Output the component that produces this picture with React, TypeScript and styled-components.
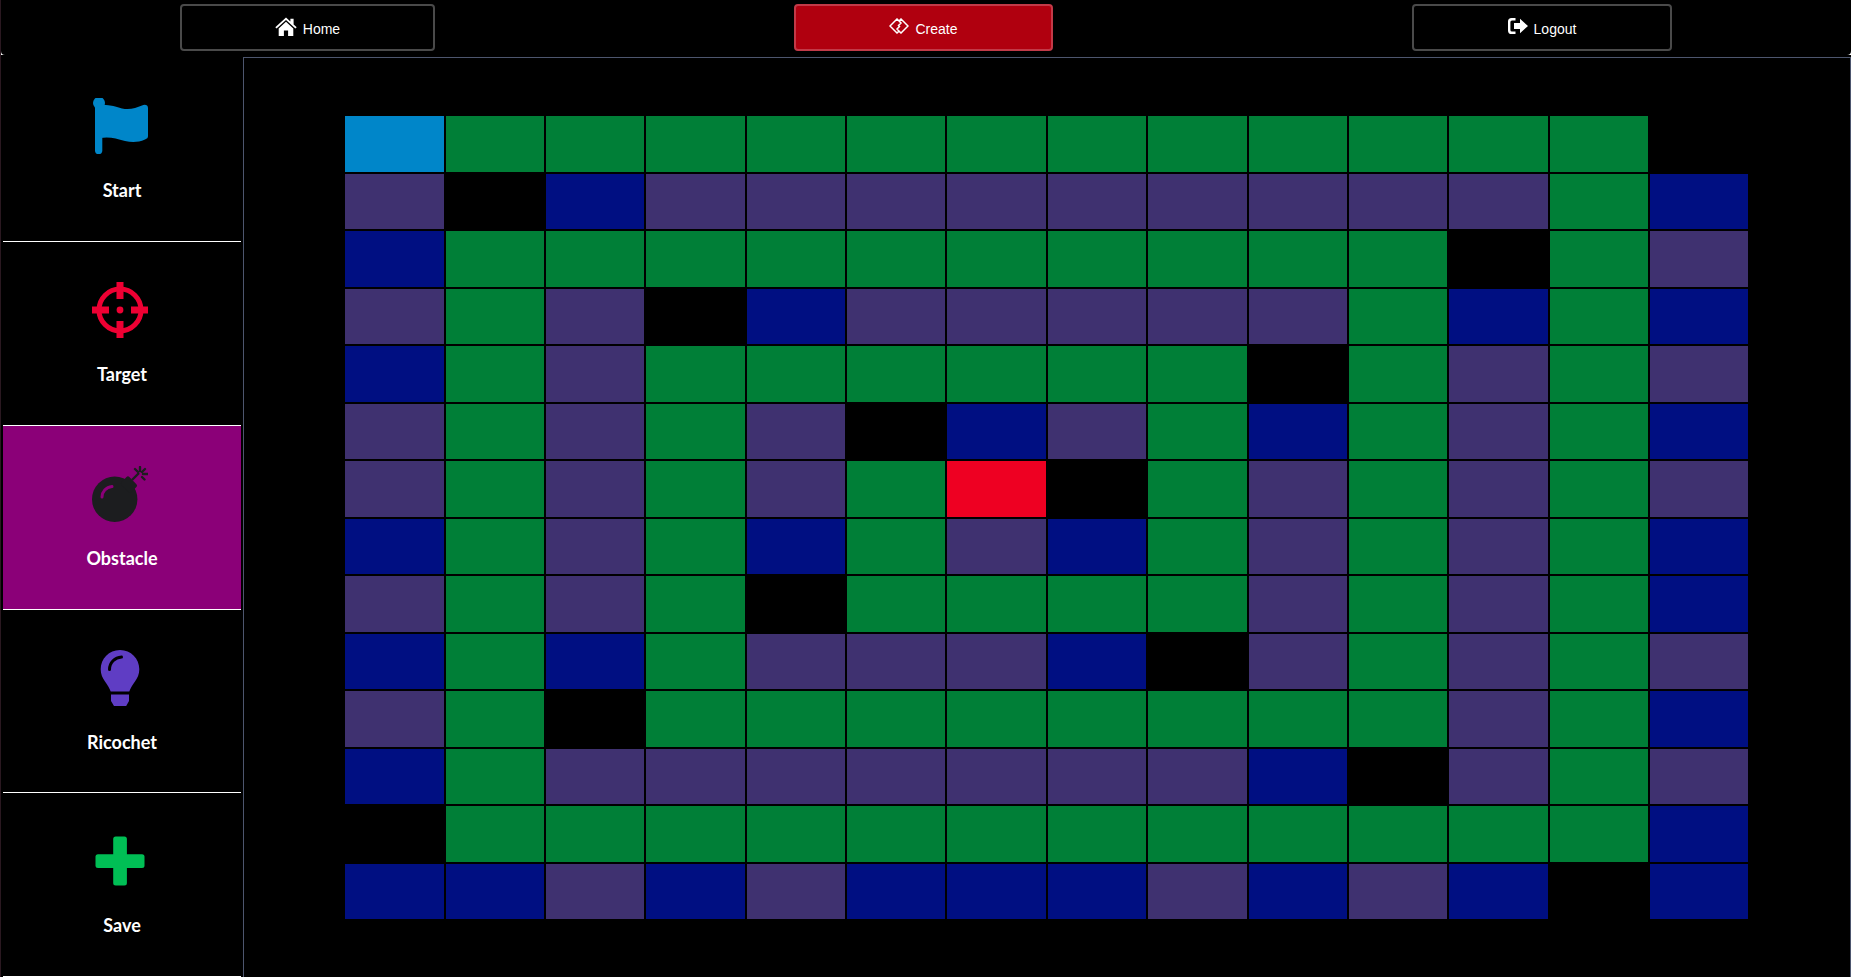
import React from "react";
import styled, { createGlobalStyle } from "styled-components";

const Global = createGlobalStyle`
  html, body { margin: 0; padding: 0; height: 100%; background: #fff; }
  #root { height: 100%; }
`;

const Page = styled.div`
  height: 100vh;
  box-sizing: border-box;
  display: flex;
  flex-direction: column;
  overflow: hidden;
  background: #fff;
  border-left: 1px solid #2a1820;
`;

const TopBar = styled.header`
  height: 55px;
  flex: none;
  box-sizing: border-box;
  padding: 4px 0 0 179px;
  display: flex;
  align-items: flex-start;
  gap: 359px;
  background: #000;
  border-radius: 0 0 4px 4px;
`;

const NavButton = styled.button<{ $width: number; $active?: boolean }>`
  width: ${(p) => p.$width}px;
  height: 47px;
  box-sizing: border-box;
  display: flex;
  align-items: center;
  justify-content: center;
  gap: 6px;
  padding: 0;
  color: #fff;
  font-family: "Liberation Sans", Arial, sans-serif;
  font-size: 14px;
  background: ${(p) => (p.$active ? "#b0000f" : "#000")};
  border: 2px solid ${(p) => (p.$active ? "#c23a48" : "#4a4a4a")};
  border-radius: 4px;
`;

const NavIcon = styled.svg`
  display: block;
  margin-bottom: 3px;
  fill: #fff;
`;

const NavLabel = styled.span`
  padding-top: 2px;
`;

const Body = styled.div`
  flex: 1;
  min-height: 0;
  display: flex;
  background: #000;
  padding-top: 2px;
`;

const Sidebar = styled.aside`
  width: 242px;
  flex: none;
  box-sizing: border-box;
  display: flex;
  flex-direction: column;
  padding: 1.3px 2px 0 2px;
`;

const Tool = styled.div<{ $active?: boolean }>`
  flex: 1;
  min-height: 0;
  box-sizing: border-box;
  display: flex;
  flex-direction: column;
  align-items: center;
  padding-top: 40px;
  background: ${(p) => (p.$active ? "#8b0078" : "#000")};
  border-bottom: 1px solid #fff;
`;

const ToolIcon = styled.svg`
  display: block;
  flex: none;
  margin-left: -4px;
`;

const ToolLabel = styled.span`
  margin-top: 25px;
  color: #fff;
  font-family: Lato, "Noto Sans", sans-serif;
  font-weight: 700;
  font-size: 18px;
  line-height: 22px;
`;

const Board = styled.main`
  flex: 1;
  min-width: 0;
  box-sizing: border-box;
  padding: 58.3px 101.66px 57.7px 101.3px;
  border: 1px solid #4d566e;
  border-bottom: 0;
  display: grid;
  grid-template-columns: repeat(14, 1fr);
  grid-template-rows: repeat(14, 1fr);
  gap: 2px;
`;

const TONES: Record<string, string> = {
  B: "#0086c9",
  G: "#007f37",
  P: "#3f3170",
  N: "#000f82",
  K: "#000000",
  R: "#ee0022",
};

const Cell = styled.div<{ $tone: string }>`
  background: ${(p) => TONES[p.$tone]};
`;

const ROWS = [
  "BGGGGGGGGGGGGK",
  "PKNPPPPPPPPPGN",
  "NGGGGGGGGGGKGP",
  "PGPKNPPPPPGNGN",
  "NGPGGGGGGKGPGP",
  "PGPGPKNPGNGPGN",
  "PGPGPGRKGPGPGP",
  "NGPGNGPNGPGPGN",
  "PGPGKGGGGPGPGN",
  "NGNGPPPNKPGPGP",
  "PGKGGGGGGGGPGN",
  "NGPPPPPPPNKPGP",
  "KGGGGGGGGGGGGN",
  "NNPNPNNNPNPNKN",
];

const HomeIcon = () => (
  <NavIcon width="22" height="19" viewBox="0 0 22 19">
    <path d="M0.300 10.200 11 0.500l4.400 4V1.700h3.200v5.700l3.100 2.800-1.300 1.400L11 3 1.600 11.600z" />
    <path d="M3.700 11.400 11 4.800l7.300 6.600V19h-5.200v-5.400H8.900V19H3.700z" />
  </NavIcon>
);

const CreateIcon = () => (
  <NavIcon width="20" height="16" viewBox="0 0 20 16">
    <path
      d="M10.500 12.500 8 15 1 8l7-7 4 4-3 3M9.500 3.500 12 1l7 7-7 7-4-4 3-3"
      stroke="#fff"
      strokeWidth="1.500"
      fill="none"
    />
  </NavIcon>
);

const LogoutIcon = () => (
  <NavIcon width="20" height="16" viewBox="0 0 20 16">
    <path d="M7.500 0v2.400H4A1.600 1.600 0 0 0 2.400 4v8A1.600 1.600 0 0 0 4 13.600h3.500V16H3.600A3.600 3.600 0 0 1 0 12.400V3.600A3.600 3.600 0 0 1 3.600 0z" />
    <path d="M12 .800 20 8l-8 7.200V11H6V5h6z" />
  </NavIcon>
);

const FlagIcon = () => (
  <ToolIcon width="56" height="56" viewBox="0 0 56 56">
    <circle cx="7" cy="5" r="6" fill="#0086c9" />
    <rect x="3" y="4" width="7.300" height="52" rx="3.600" fill="#0086c9" />
    <path
      d="M8 7C16 6 24 9 30 10.500C38 12 44 10 50 7.500C53 6 56 7 56 10V38C56 40 55 40.500 53 41.500C46 44.500 40 44.500 33 43C24 40.500 18 38.500 8 40Z"
      fill="#0086c9"
    />
  </ToolIcon>
);

const TargetIcon = () => (
  <ToolIcon width="56" height="56" viewBox="0 0 56 56">
    <circle cx="28" cy="28" r="21" fill="none" stroke="#ee0033" strokeWidth="5" />
    <rect x="24.500" y="0" width="7" height="17" fill="#ee0033" />
    <rect x="24.500" y="39" width="7" height="17" fill="#ee0033" />
    <rect x="0" y="24.500" width="17" height="7" fill="#ee0033" />
    <rect x="39" y="24.500" width="17" height="7" fill="#ee0033" />
    <circle cx="28" cy="28" r="3.400" fill="#ee0033" />
  </ToolIcon>
);

const BombIcon = () => (
  <ToolIcon width="56" height="56" viewBox="0 0 56 56">
    <circle cx="22.700" cy="33.300" r="22.700" fill="#1c1d1f" />
    <rect x="30" y="13" width="14" height="11" rx="2" fill="#1c1d1f" transform="rotate(45 37 18.500)" />
    <path d="M40 14 47 7" stroke="#1c1d1f" strokeWidth="2.400" />
    <path
      d="M48 1v4M43 3l3 3M53 3l-3 3M51 8h5M50 11l2.500 2.500"
      stroke="#1c1d1f"
      strokeWidth="2.400"
      strokeLinecap="round"
      fill="none"
    />
    <path d="M10 31c0-5 4-10 10-10.500" stroke="#8b0078" strokeWidth="3" fill="none" strokeLinecap="round" />
  </ToolIcon>
);

const BulbIcon = () => (
  <ToolIcon width="56" height="56" viewBox="0 0 56 56">
    <path
      d="M28 0C17 0 8.700 8.700 8.700 19.300c0 5 1.800 8.800 4.300 12.300 2.400 3.400 4.500 6.700 5.700 9.900h18.600c1.200-3.200 3.300-6.500 5.700-9.900 2.500-3.500 4.300-7.300 4.300-12.300C47.300 8.700 39 0 28 0z"
      fill="#5f3dc4"
    />
    <path d="M19 44.500h18V51l-2.800 5H22l-3-5z" fill="#5f3dc4" />
    <path d="M17.500 19.500C17.500 12.500 23 7.500 29.500 7" stroke="#000" strokeWidth="3" fill="none" strokeLinecap="round" />
  </ToolIcon>
);

const PlusIcon = () => (
  <ToolIcon width="56" height="56" viewBox="0 0 56 56">
    <rect x="21.200" y="3.500" width="13.700" height="49" rx="2.500" fill="#00bf55" />
    <rect x="3.500" y="21.200" width="49" height="13.700" rx="2.500" fill="#00bf55" />
  </ToolIcon>
);

export default function App() {
  return (
    <Page>
      <Global />
      <TopBar>
        <NavButton $width={255}>
          <HomeIcon />
          <NavLabel>Home</NavLabel>
        </NavButton>
        <NavButton $width={259} $active>
          <CreateIcon />
          <NavLabel>Create</NavLabel>
        </NavButton>
        <NavButton $width={260}>
          <LogoutIcon />
          <NavLabel>Logout</NavLabel>
        </NavButton>
      </TopBar>
      <Body>
        <Sidebar>
          <Tool>
            <FlagIcon />
            <ToolLabel>Start</ToolLabel>
          </Tool>
          <Tool>
            <TargetIcon />
            <ToolLabel>Target</ToolLabel>
          </Tool>
          <Tool $active>
            <BombIcon />
            <ToolLabel>Obstacle</ToolLabel>
          </Tool>
          <Tool>
            <BulbIcon />
            <ToolLabel>Ricochet</ToolLabel>
          </Tool>
          <Tool>
            <PlusIcon />
            <ToolLabel>Save</ToolLabel>
          </Tool>
        </Sidebar>
        <Board>
          {ROWS.flatMap((row, r) =>
            row.split("").map((tone, c) => <Cell key={`${r}-${c}`} $tone={tone} />)
          )}
        </Board>
      </Body>
    </Page>
  );
}
